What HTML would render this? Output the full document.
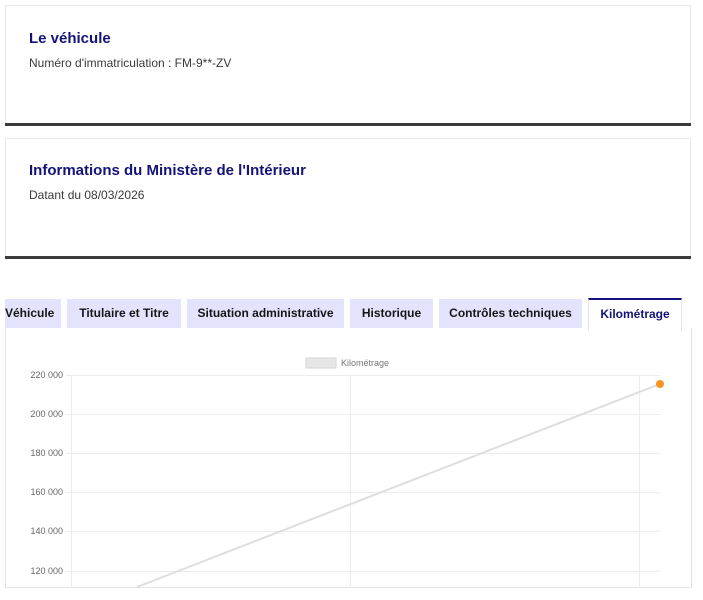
<!DOCTYPE html>
<html><head><meta charset="utf-8"><style>
body{margin:0;background:#fff;width:703px;height:600px;overflow:hidden;position:relative;font-family:"Liberation Sans",sans-serif}
.card{position:absolute;left:5px;width:684px;border:1px solid #e8e8e8;border-bottom:none;background:#fff}
.bar{position:absolute;left:5px;width:686px;height:3px;background:#3a3a3a}
.t{position:absolute;left:29px;color:#13137a;font-weight:bold;font-size:15px}
.s{position:absolute;left:29px;color:#3a3a3a;font-size:12px}
.tab{position:absolute;top:299px;height:29px;background:#e3e3fd;color:#161616;font-weight:bold;font-size:12px;line-height:29px;text-align:center;white-space:nowrap;overflow:hidden}
</style></head><body>
<div class="card" style="top:5px;height:118px"></div><div class="bar" style="top:123px"></div>
<div class="t" style="top:30px">Le véhicule</div>
<div class="s" style="top:56px">Numéro d'immatriculation : FM-9**-ZV</div>
<div class="card" style="top:138px;height:118px"></div><div class="bar" style="top:256px"></div>
<div class="t" style="top:162px">Informations du Ministère de l'Intérieur</div>
<div class="s" style="top:188px">Datant du 08/03/2026</div>

<div style="position:absolute;left:5px;top:328px;width:685px;height:259px;border:1px solid #e5e5e5;border-top:none"></div>
<div class="tab" style="left:5px;width:56px;text-align:right"><span style="margin-right:12px">Véhicule</span></div>
<div class="tab" style="left:67px;width:114px">Titulaire et Titre</div>
<div class="tab" style="left:187px;width:157px">Situation administrative</div>
<div class="tab" style="left:350px;width:83px">Historique</div>
<div class="tab" style="left:439px;width:143px">Contrôles techniques</div>
<div class="tab" style="left:588px;width:92px;background:#fff;color:#13137a;border-top:2px solid #13137a;top:298px;height:31px;border-left:1px solid #e5e5e5;border-right:1px solid #e5e5e5">Kilométrage</div>

<svg style="position:absolute;left:0;top:0" width="703" height="600">
<g stroke="#ececec" stroke-width="1">
<line x1="66" y1="375.5" x2="660" y2="375.5"/><line x1="66" y1="414.5" x2="660" y2="414.5"/>
<line x1="66" y1="453.5" x2="660" y2="453.5"/><line x1="66" y1="492.5" x2="660" y2="492.5"/>
<line x1="66" y1="531.5" x2="660" y2="531.5"/><line x1="66" y1="571.5" x2="660" y2="571.5"/>
<line x1="71.5" y1="375" x2="71.5" y2="587"/><line x1="350.5" y1="375" x2="350.5" y2="587"/><line x1="639.5" y1="375" x2="639.5" y2="587"/>
</g>
<g font-family="Liberation Sans,sans-serif" font-size="9" fill="#666" text-anchor="end">
<text x="63" y="378">220 000</text><text x="63" y="417">200 000</text><text x="63" y="456">180 000</text>
<text x="63" y="495">160 000</text><text x="63" y="534">140 000</text><text x="63" y="574">120 000</text>
</g>
<rect x="306" y="358" width="30" height="10" fill="#e6e6e6" stroke="#d6d6d6"/>
<text x="341" y="366" font-family="Liberation Sans,sans-serif" font-size="9" fill="#777">Kilométrage</text>
<line x1="137" y1="587" x2="660" y2="384" stroke="#dedede" stroke-width="2"/>
<circle cx="660" cy="384" r="4" fill="#f7931e"/>
</svg>
</body></html>
